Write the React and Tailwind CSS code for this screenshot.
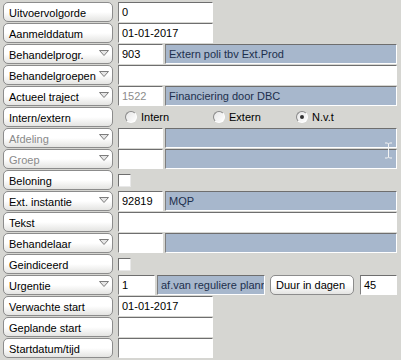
import React from 'react'

const font = { fontFamily: '"Liberation Sans", Arial, sans-serif' }

function Arrow() {
  return (
    <svg width="10" height="6" viewBox="0 0 10 6" className="absolute right-[3px] top-[5px]">
      <polygon points="0.5,0.5 9.5,0.5 5,5.5" fill="#e6e6e6" stroke="#7c7c7c" strokeWidth="1" />
    </svg>
  )
}

function Label({ text, dropdown, disabled }) {
  return (
    <div
      className={`relative flex h-[20px] w-[110px] shrink-0 items-center rounded-[5px] border border-[#8c8c8c] bg-linear-to-b from-white via-white to-[#e4e4e2] pl-[5px] pt-[2px] text-[11px] ${
        disabled ? 'text-[#8a8a8a]' : 'text-black'
      }`}
    >
      {text}
      {dropdown && <Arrow />}
    </div>
  )
}

function Field({ value = '', w, blue, gray, grow }) {
  return (
    <div
      className={`flex h-[20px] items-center overflow-hidden whitespace-nowrap border border-t-[#6e6e6e] border-l-[#7e7e7e] border-b-white border-r-white pl-[3px] text-[11px] ${
        blue ? 'bg-[#a7b7cc] text-[#1d2f4d]' : 'bg-white'
      } ${gray ? 'text-[#8c8c8c]' : blue ? '' : 'text-black'} ${grow ? 'flex-1' : 'shrink-0'}`}
      style={w ? { width: w } : undefined}
    >
      {value}
    </div>
  )
}

function Check() {
  return <div className="h-[13px] w-[13px] border border-t-[#6e6e6e] border-l-[#6e6e6e] border-b-[#e8e8e8] border-r-[#e8e8e8] bg-white" />
}

function Radio({ label, checked }) {
  return (
    <div className="flex items-center gap-[4px] text-[11px] text-black">
      <div className="flex h-[12px] w-[12px] items-center justify-center rounded-full border border-t-[#8a8a8a] border-l-[#8a8a8a] border-b-white border-r-white bg-linear-to-br from-[#e6e6e6] to-white">
        {checked && <div className="h-[4px] w-[4px] rounded-full bg-[#333]" />}
      </div>
      {label}
    </div>
  )
}

function Row({ children }) {
  return <div className="flex h-[20px] items-center gap-[5px]">{children}</div>
}

export default function App() {
  return (
    <div className="relative h-[360px] w-[401px] overflow-hidden bg-[#d6d6d2]" style={font}>
      <div className="flex flex-col gap-[1px] pl-[3px] pr-[4px] pt-[2px]">
        <Row>
          <Label text="Uitvoervolgorde" />
          <Field value="0" w={95} />
        </Row>
        <Row>
          <Label text="Aanmelddatum" />
          <Field value="01-01-2017" w={95} />
        </Row>
        <Row>
          <Label text="Behandelprogr." dropdown />
          <div className="flex flex-1 gap-[2px]">
            <Field value="903" w={45} />
            <Field value="Extern poli tbv Ext.Prod" blue grow />
          </div>
        </Row>
        <Row>
          <Label text="Behandelgroepen" dropdown />
          <Field grow />
        </Row>
        <Row>
          <Label text="Actueel traject" dropdown />
          <div className="flex flex-1 gap-[2px]">
            <Field value="1522" w={45} gray />
            <Field value="Financiering door DBC" blue grow />
          </div>
        </Row>
        <Row>
          <Label text="Intern/extern" />
          <div className="flex flex-1 items-center pl-[7px]">
            <div className="w-[88px]">
              <Radio label="Intern" />
            </div>
            <div className="w-[83px]">
              <Radio label="Extern" />
            </div>
            <Radio label="N.v.t" checked />
          </div>
        </Row>
        <Row>
          <Label text="Afdeling" dropdown disabled />
          <div className="flex flex-1 gap-[2px]">
            <Field w={45} />
            <Field blue grow />
          </div>
        </Row>
        <Row>
          <Label text="Groep" dropdown disabled />
          <div className="flex flex-1 gap-[2px]">
            <Field w={45} />
            <Field blue grow />
          </div>
        </Row>
        <Row>
          <Label text="Beloning" />
          <Check />
        </Row>
        <Row>
          <Label text="Ext. instantie" dropdown />
          <div className="flex flex-1 gap-[2px]">
            <Field value="92819" w={45} />
            <Field value="MQP" blue grow />
          </div>
        </Row>
        <Row>
          <Label text="Tekst" />
          <Field grow />
        </Row>
        <Row>
          <Label text="Behandelaar" dropdown />
          <div className="flex flex-1 gap-[2px]">
            <Field w={45} />
            <Field blue grow />
          </div>
        </Row>
        <Row>
          <Label text="Geindiceerd" />
          <Check />
        </Row>
        <Row>
          <Label text="Urgentie" dropdown />
          <div className="flex flex-1 items-center">
            <Field value="1" w={37} />
            <div className="ml-[2px]">
              <Field value="af.van reguliere planning" w={108} blue />
            </div>
            <div className="ml-[5px] flex h-[20px] w-[84px] items-center rounded-[5px] border border-[#8c8c8c] bg-linear-to-b from-white via-white to-[#e4e4e2] pl-[5px] pt-[1px] text-[11px] text-black">
              Duur in dagen
            </div>
            <div className="ml-[6px] flex flex-1">
              <Field value="45" grow />
            </div>
          </div>
        </Row>
        <Row>
          <Label text="Verwachte start" />
          <Field value="01-01-2017" w={95} />
        </Row>
        <Row>
          <Label text="Geplande start" />
          <Field w={95} />
        </Row>
        <Row>
          <Label text="Startdatum/tijd" />
          <Field w={95} />
        </Row>
      </div>
      <svg width="9" height="17" viewBox="0 0 9 17" className="absolute left-[384px] top-[142px]">
        <path d="M1 1h2.5l1 1 1-1H8M4.5 2v13M1 16h2.5l1-1 1 1H8" fill="none" stroke="#f4f4f4" strokeWidth="1" />
      </svg>
    </div>
  )
}
